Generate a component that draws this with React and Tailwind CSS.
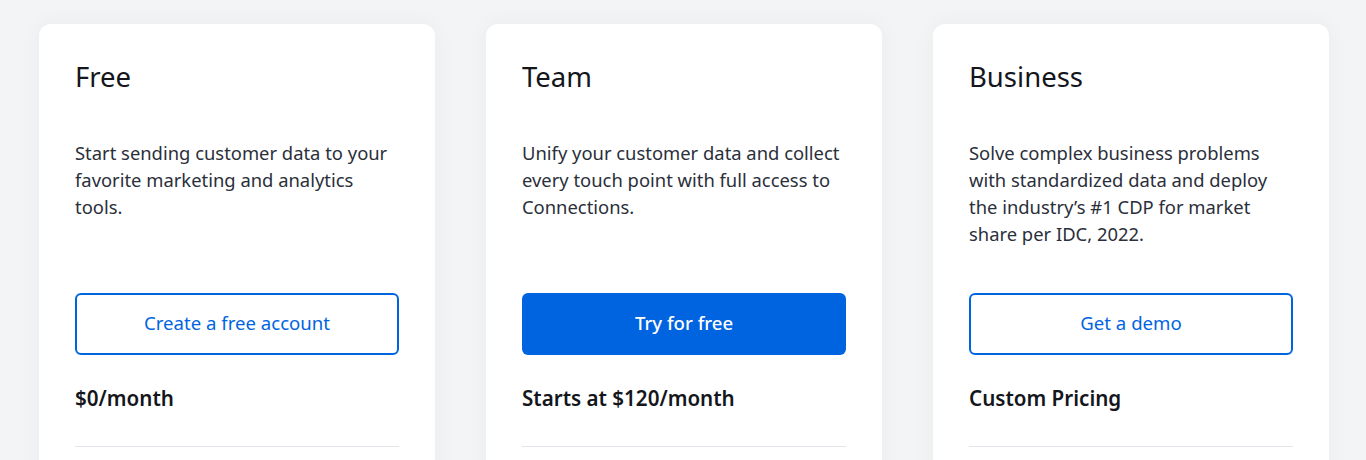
const plans = [
  {
    name: 'Free',
    description: 'Start sending customer data to your favorite marketing and analytics tools.',
    cta: 'Create a free account',
    primary: false,
    price: '$0/month',
  },
  {
    name: 'Team',
    description: 'Unify your customer data and collect every touch point with full access to Connections.',
    cta: 'Try for free',
    primary: true,
    price: 'Starts at $120/month',
  },
  {
    name: 'Business',
    description: 'Solve complex business problems with standardized data and deploy the industry’s #1 CDP for market share per IDC, 2022.',
    cta: 'Get a demo',
    primary: false,
    price: 'Custom Pricing',
  },
];

function PlanCard({ plan }) {
  return (
    <div className="flex flex-col rounded-xl bg-white px-9 pt-[36px] pb-10 shadow-[0_0_24px_rgba(0,0,0,0.04)]">
      <h2 className="text-[27.5px] leading-[34px] text-[#14161c]">{plan.name}</h2>
      <p className="mt-[45px] min-h-[108px] text-[18.4px] leading-[27px] text-[#2a2f3a]">
        {plan.description}
      </p>
      {plan.primary ? (
        <button className="mt-[46px] h-[62px] w-full rounded-md bg-[#0064e1] pb-[3px] text-[18.6px] font-medium leading-[27px] text-white">
          {plan.cta}
        </button>
      ) : (
        <button className="mt-[46px] h-[62px] w-full rounded-md border-2 border-[#0064e1] bg-white pb-[3px] text-[18.6px] leading-[27px] text-[#0064e1]">
          {plan.cta}
        </button>
      )}
      <div className="mt-[29px] text-[20.6px] font-semibold leading-7 text-[#14161c]">{plan.price}</div>
      <div className="mt-[34px] h-px w-full bg-[#e3e5ea]" />
      <div className="h-20" />
    </div>
  );
}

export default function App() {
  return (
    <div
      className="min-h-screen bg-[#f3f4f6] pl-[39px] pt-6"
      style={{ fontFamily: '"Noto Sans", "Open Sans", sans-serif' }}
    >
      <div className="grid grid-cols-[396px_396px_396px] gap-[51px]">
        {plans.map((plan) => (
          <PlanCard key={plan.name} plan={plan} />
        ))}
      </div>
    </div>
  );
}
